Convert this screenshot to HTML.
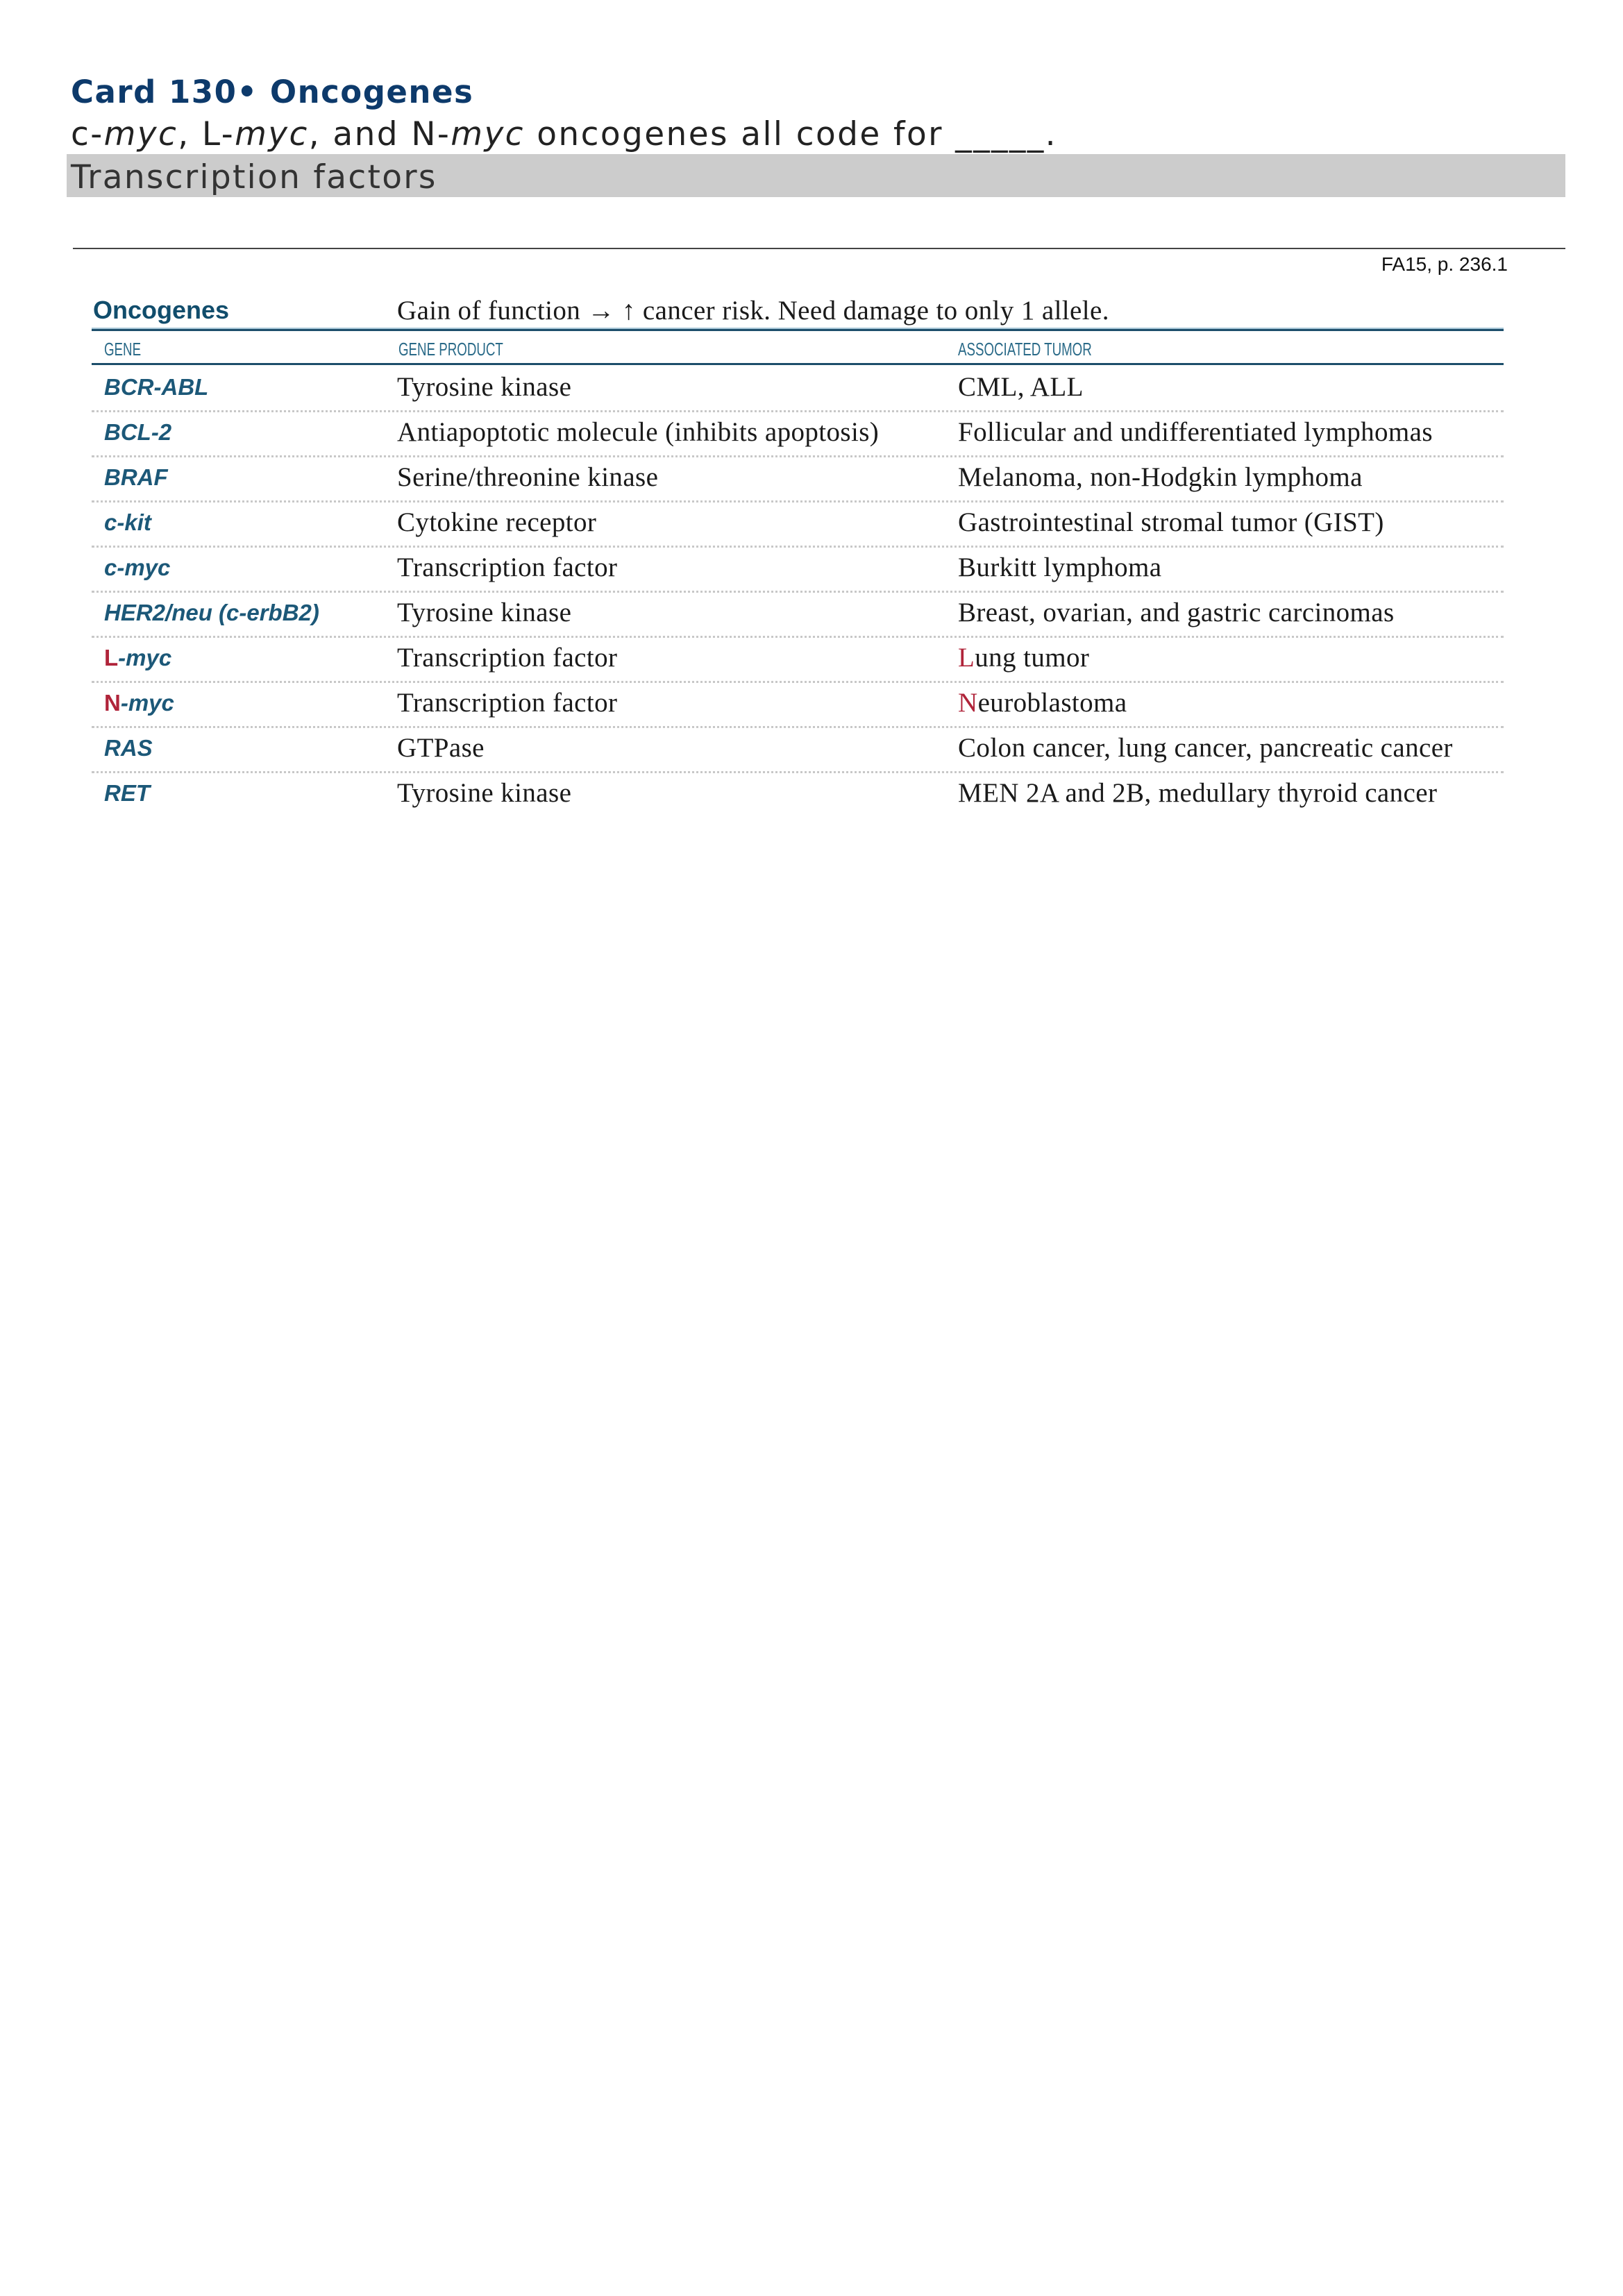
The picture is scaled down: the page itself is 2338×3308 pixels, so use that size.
<!DOCTYPE html>
<html><head><meta charset="utf-8"><style>
html,body{margin:0;padding:0;background:#fff;}
body{width:2338px;height:3308px;position:relative;overflow:hidden;}
.a{position:absolute;white-space:nowrap;line-height:1;}
.t{font-family:"DejaVu Sans","Liberation Sans",sans-serif;}
.s{font-family:"Liberation Serif",serif;font-size:39px;letter-spacing:0.4px;color:#1a1a1a;}
.g{font-family:"Liberation Sans",sans-serif;font-size:33px;font-weight:bold;font-style:italic;color:#1c5878;}
.h{font-family:"Liberation Sans",sans-serif;font-size:26px;color:#2a6a88;transform:scaleX(0.72);transform-origin:left;}
.r{color:#b0243a;font-style:normal;}
.rs{color:#b0243a;}
.dot{position:absolute;left:132px;width:2034px;height:0;border-top:3px dotted #c8c8c8;}
</style></head><body>
<div class="a t" style="left:102px;top:110px;font-size:45px;font-weight:bold;letter-spacing:1.5px;color:#0d3a6b;">Card 130• Oncogenes</div>
<div style="position:absolute;left:96px;top:222px;width:2159px;height:62px;background:#cccccc;"></div>
<div class="a t" style="left:102px;top:170px;font-size:47px;letter-spacing:2.4px;color:#222;">c-<i>myc</i>, L-<i>myc</i>, and N-<i>myc</i> oncogenes all code for _____.</div>
<div class="a t" style="left:102px;top:232px;font-size:47px;letter-spacing:2.3px;color:#333;">Transcription factors</div>
<div style="position:absolute;left:105px;top:357px;width:2150px;height:2px;background:#444;"></div>
<div class="a" style="left:1960px;top:367px;width:212px;text-align:right;font-family:'Liberation Sans',sans-serif;font-size:28px;color:#111;">FA15, p. 236.1</div>
<div class="a" style="left:134px;top:429px;font-family:'Liberation Sans',sans-serif;font-weight:bold;font-size:36px;color:#114d6c;">Oncogenes</div>
<div class="a s" style="left:572px;top:428px;">Gain of function → ↑ cancer risk. Need damage to only 1 allele.</div>
<div style="position:absolute;left:132px;top:472px;width:2034px;height:2px;background:#a9c8d8;"></div>
<div style="position:absolute;left:132px;top:474px;width:2034px;height:3px;background:#1d4e6b;"></div>
<div class="a h" style="left:150px;top:490px;">GENE</div>
<div class="a h" style="left:574px;top:490px;">GENE PRODUCT</div>
<div class="a h" style="left:1380px;top:490px;">ASSOCIATED TUMOR</div>
<div style="position:absolute;left:132px;top:523px;width:2034px;height:3px;background:#1d4e6b;"></div>

<div class="a g" style="left:150px;top:541px;">BCR-ABL</div><div class="a s" style="left:572px;top:538px;">Tyrosine kinase</div><div class="a s" style="left:1380px;top:538px;">CML, ALL</div>
<div class="dot" style="top:591px;"></div>
<div class="a g" style="left:150px;top:606px;">BCL-2</div><div class="a s" style="left:572px;top:603px;">Antiapoptotic molecule (inhibits apoptosis)</div><div class="a s" style="left:1380px;top:603px;">Follicular and undifferentiated lymphomas</div>
<div class="dot" style="top:656px;"></div>
<div class="a g" style="left:150px;top:671px;">BRAF</div><div class="a s" style="left:572px;top:668px;">Serine/threonine kinase</div><div class="a s" style="left:1380px;top:668px;">Melanoma, non-Hodgkin lymphoma</div>
<div class="dot" style="top:721px;"></div>
<div class="a g" style="left:150px;top:736px;">c-kit</div><div class="a s" style="left:572px;top:733px;">Cytokine receptor</div><div class="a s" style="left:1380px;top:733px;">Gastrointestinal stromal tumor (GIST)</div>
<div class="dot" style="top:786px;"></div>
<div class="a g" style="left:150px;top:801px;">c-myc</div><div class="a s" style="left:572px;top:798px;">Transcription factor</div><div class="a s" style="left:1380px;top:798px;">Burkitt lymphoma</div>
<div class="dot" style="top:851px;"></div>
<div class="a g" style="left:150px;top:866px;">HER2/neu (c-erbB2)</div><div class="a s" style="left:572px;top:863px;">Tyrosine kinase</div><div class="a s" style="left:1380px;top:863px;">Breast, ovarian, and gastric carcinomas</div>
<div class="dot" style="top:916px;"></div>
<div class="a g" style="left:150px;top:931px;"><span class="r">L</span>-myc</div><div class="a s" style="left:572px;top:928px;">Transcription factor</div><div class="a s" style="left:1380px;top:928px;"><span class="rs">L</span>ung tumor</div>
<div class="dot" style="top:981px;"></div>
<div class="a g" style="left:150px;top:996px;"><span class="r">N</span>-myc</div><div class="a s" style="left:572px;top:993px;">Transcription factor</div><div class="a s" style="left:1380px;top:993px;"><span class="rs">N</span>euroblastoma</div>
<div class="dot" style="top:1046px;"></div>
<div class="a g" style="left:150px;top:1061px;">RAS</div><div class="a s" style="left:572px;top:1058px;">GTPase</div><div class="a s" style="left:1380px;top:1058px;">Colon cancer, lung cancer, pancreatic cancer</div>
<div class="dot" style="top:1111px;"></div>
<div class="a g" style="left:150px;top:1126px;">RET</div><div class="a s" style="left:572px;top:1123px;">Tyrosine kinase</div><div class="a s" style="left:1380px;top:1123px;">MEN 2A and 2B, medullary thyroid cancer</div>
</body></html>
